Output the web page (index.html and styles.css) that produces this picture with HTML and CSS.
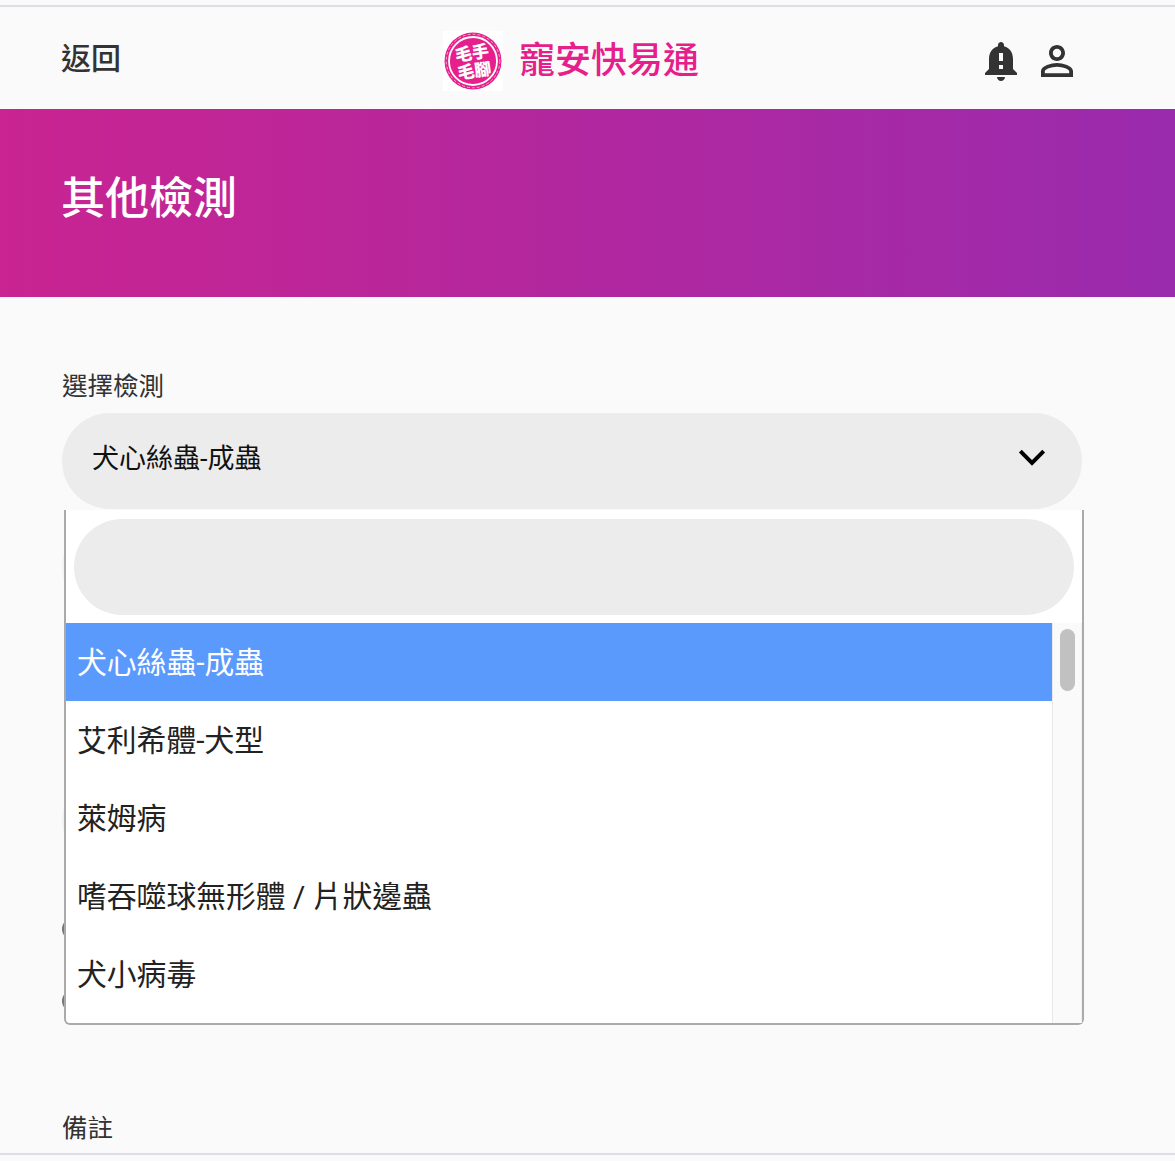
FILE: index.html
```html
<!DOCTYPE html>
<html lang="zh-Hant">
  <head>
    <meta charset="utf-8" />
    <title>其他檢測</title>
    <link rel="stylesheet" href="styles.css">
  </head>

  <body>
    <div class="page">
      <div class="topbar">
        <div class="back">返回</div>
        <div class="brand">
          <div class="logo">
            <svg width="60" height="60" viewBox="0 0 60 60">
              <circle cx="30" cy="30" r="28.5" fill="#e61f8c" />
              <circle cx="30" cy="30" r="26.8" fill="none" stroke="#f7a8d2" stroke-width="1" stroke-dasharray="3 2" />
              <circle cx="30" cy="30" r="24" fill="none" stroke="#fff" stroke-width="1.8" />
              <g transform="rotate(-8 30 30)">
                <text x="30" y="28" class="logo-text" text-anchor="middle">毛手</text>
                <text x="30" y="46" class="logo-text" text-anchor="middle">毛腳</text>
              </g>
            </svg>
          </div>
          <div class="brand-name">寵安快易通</div>
        </div>
        <div class="top-icons">
          <svg class="icon" width="48" height="48" viewBox="0 0 24 24">
            <path fill="#333" d="M12 22c1.1 0 2-.9 2-2h-4c0 1.1.9 2 2 2zm6-6v-5c0-3.07-1.63-5.64-4.5-6.32V4c0-.83-.67-1.5-1.5-1.5s-1.5.67-1.5 1.5v.68C7.64 5.36 6 7.92 6 11v5l-2 2v1h16v-1l-2-2zm-5 0h-2v-2h2v2zm0-4h-2V8h2v4z" />
          </svg>
          <svg class="icon" width="48" height="48" viewBox="0 0 24 24">
            <path fill="#333" d="M12 5.9a2.1 2.1 0 1 1 0 4.2 2.1 2.1 0 0 1 0-4.2m0 9c2.97 0 6.1 1.46 6.1 2.1v1.1H5.9V17c0-.64 3.13-2.1 6.1-2.1M12 4C9.79 4 8 5.79 8 8s1.79 4 4 4 4-1.79 4-4-1.79-4-4-4zm0 9c-2.67 0-8 1.34-8 4v3h16v-3c0-2.66-5.33-4-8-4z" />
          </svg>
        </div>
      </div>

      <div class="banner">
        <h1 class="banner-title">其他檢測</h1>
      </div>

      <div class="form">
        <div class="field-label">選擇檢測</div>
        <div class="select-wrap">
          <div class="select-box">
            <span>犬心絲蟲-成蟲</span>
            <svg class="chevron" width="40" height="40" viewBox="0 0 24 24">
              <path fill="none" stroke="#000" stroke-width="2.4" d="M5 8.5l7 7 7-7" />
            </svg>
          </div>

          <!-- fields under the open list, only their edges show -->
          <div class="hidden-pill"></div>
          <div class="hidden-pill lower"></div>
          <span class="radio"></span>
          <span class="radio"></span>

          <div class="dropdown">
            <div class="search-row">
              <div class="search-box"></div>
            </div>
            <div class="list">
              <div class="options">
                <div class="option selected">犬心絲蟲-成蟲</div>
                <div class="option">艾利希體-犬型</div>
                <div class="option">萊姆病</div>
                <div class="option">嗜吞噬球無形體 / 片狀邊蟲</div>
                <div class="option">犬小病毒</div>
              </div>
              <div class="scrollbar">
                <div class="thumb"></div>
              </div>
            </div>
          </div>
        </div>
        <div class="field-label">備註</div>
      </div>
    </div>
  </body>
</html>
```

FILE: styles.css
```css
html, body {
  margin: 0;
  padding: 0;
}

body {
  background-color: #fafafa;
  color: #333;
  font-family: "Roboto", "Noto Sans CJK TC", sans-serif;
}

.page {
  height: 1155px;
  box-sizing: border-box;
  padding-top: 5px;
  border-bottom: 2px solid #dddde3;
  display: flex;
  flex-direction: column;
  overflow: hidden;
}

.topbar {
  height: 102px;
  flex-shrink: 0;
  border-top: 2px solid #dddde3;
  display: flex;
  align-items: center;
  justify-content: space-between;
  padding: 0 94px 0 61px;
  position: relative;
}

.back {
  font-size: 30px;
  font-weight: 500;
  line-height: 1;
  margin-top: 1px;
  color: #333;
}

.brand {
  display: flex;
  align-items: center;
  gap: 16px;
  position: absolute;
  left: 443px;
  top: 24px;
}

.logo {
  width: 60px;
  height: 60px;
  background-color: #fff;
}

.logo-text {
  font-size: 17px;
  font-weight: 900;
  fill: #fff;
  font-family: "Noto Sans CJK TC", sans-serif;
}

.brand-name {
  font-size: 36px;
  font-weight: 500;
  line-height: 1;
  color: #e61f8c;
}

.top-icons {
  display: flex;
  align-items: center;
  gap: 8px;
  margin-top: 5px;
}

.banner {
  height: 188px;
  flex-shrink: 0;
  background: linear-gradient(90deg, #c92491, #9a2bad);
  display: flex;
  align-items: center;
  padding-left: 61px;
}

.banner-title {
  margin: 0;
  font-size: 44px;
  font-weight: 500;
  line-height: 1;
  margin-top: -8px;
  color: #fff;
}

.form {
  padding: 74px 93px 0 62px;
}

.field-label {
  font-size: 25.5px;
  line-height: 30px;
  color: #333;
}

.select-wrap {
  position: relative;
  margin-top: 12px;
  height: 700px;
}

.select-box {
  height: 96px;
  border-radius: 48px;
  background-color: #ececec;
  display: flex;
  align-items: center;
  justify-content: space-between;
  padding: 0 30px;
  font-size: 27px;
  color: #111;
}

.select-box span {
  margin-top: -9px;
}

.chevron {
  margin-top: -8px;
}

.hidden-pill {
  height: 96px;
  border-radius: 48px;
  background-color: #f2f2f2;
  margin-top: 10px;
}

.hidden-pill.lower {
  margin-top: 157px;
}

.radio {
  display: block;
  width: 22px;
  height: 22px;
  border-radius: 50%;
  background-color: #777;
  margin-top: 50px;
}

.dropdown {
  position: absolute;
  left: 2px;
  top: 97px;
  width: 1020px;
  height: 515px;
  box-sizing: border-box;
  background-color: #fff;
  border-left: 2px solid #aaa;
  border-right: 2px solid #aaa;
  border-bottom: 2px solid #aaa;
  border-radius: 0 0 6px 6px;
  display: flex;
  flex-direction: column;
}

.search-row {
  padding: 9px 8px 8px;
}

.search-box {
  height: 96px;
  border-radius: 48px;
  background-color: #ececec;
}

.list {
  flex: 1;
  display: flex;
  min-height: 0;
}

.options {
  flex: 1;
}

.option {
  height: 78px;
  display: flex;
  align-items: center;
  padding-left: 11px;
  padding-bottom: 4px;
  box-sizing: border-box;
  font-size: 29.8px;
  color: #222;
}

.option.selected {
  background-color: #5a9afc;
  color: #fff;
}

.scrollbar {
  width: 30px;
  box-sizing: border-box;
  background-color: #fafafa;
  border-left: 1px solid #e8e8e8;
  border-right: 1px solid #f0f0f0;
  padding: 6px 6px 0 7px;
}

.thumb {
  height: 62px;
  border-radius: 8px;
  background-color: #c1c1c1;
}
```
